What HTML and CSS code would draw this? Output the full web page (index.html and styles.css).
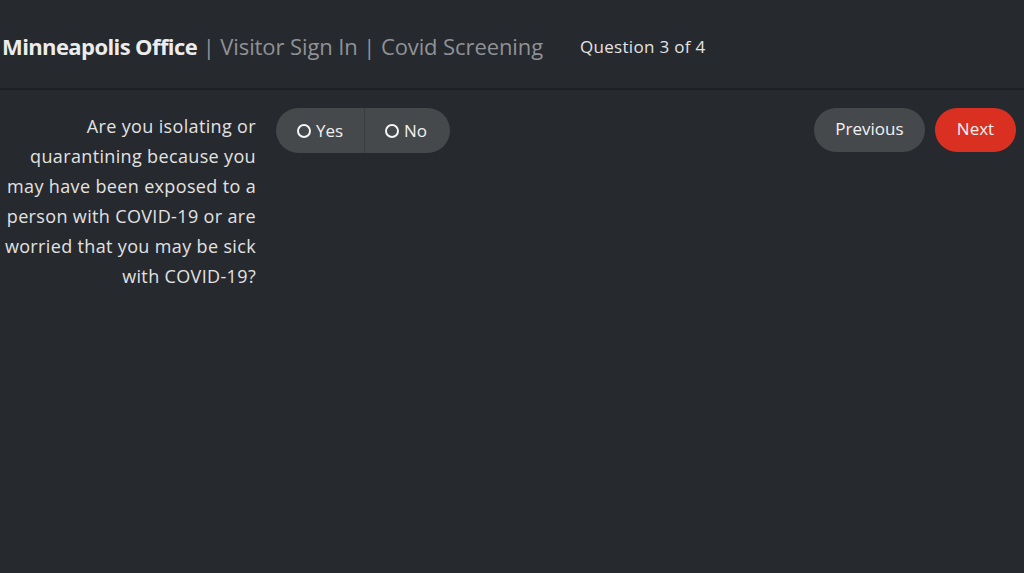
FILE: index.html
```html
<!DOCTYPE html>
<html>
<head>
<meta charset="utf-8">
<link rel="stylesheet" href="styles.css">
</head>
<body>
<header class="top">
  <h1 class="title"><span class="office">Minneapolis Office</span><span class="sub"> | Visitor Sign In | Covid Screening</span></h1>
  <div class="progress">Question 3 of 4</div>
</header>
<main class="content">
  <p class="question">Are you isolating or<br>quarantining because you<br>may have been exposed to a<br>person with COVID-19 or are<br>worried that you may be sick<br>with COVID-19?</p>
  <div class="choices">
    <label class="choice"><span class="radio"></span>Yes</label>
    <label class="choice"><span class="radio"></span>No</label>
  </div>
  <div class="nav">
    <button class="btn btn-prev">Previous</button>
    <button class="btn btn-next">Next</button>
  </div>
</main>
</body>
</html>
```
FILE: styles.css
```css
html, body {
  margin: 0;
  padding: 0;
  background: #26292e;
  height: 100%;
}
body {
  font-family: "Open Sans", "DejaVu Sans", sans-serif;
  color: #e6e6e6;
}
.top {
  display: flex;
  align-items: center;
  height: 90px;
  padding-left: 2px;
  padding-top: 4px;
  border-bottom: 2px solid #1d1f23;
  box-sizing: border-box;
}
.title {
  margin: 0;
  font-size: 22px;
  font-weight: 400;
  white-space: nowrap;
}
.office {
  font-weight: 700;
  color: #ececec;
  letter-spacing: -0.6px;
}
.sub {
  color: #8f9296;
  letter-spacing: -0.1px;
}
.progress {
  margin-left: 37px;
  font-size: 17px;
  letter-spacing: 0.3px;
  color: #e4e4e4;
}
.content {
  display: flex;
  align-items: flex-start;
  padding-top: 17px;
}
.question {
  margin: 0;
  margin-top: 4px;
  width: 256px;
  text-align: right;
  white-space: nowrap;
  font-size: 18px;
  letter-spacing: 0.35px;
  line-height: 30px;
  color: #e2e2e2;
}
.choices {
  display: flex;
  margin-left: 20px;
  margin-top: 1px;
  height: 45px;
  background: #45494c;
  border-radius: 23px;
  overflow: hidden;
}
.choice {
  display: flex;
  align-items: center;
  font-size: 17px;
  color: #f0f0f0;
}
.choice:first-child {
  width: 89px;
  padding-left: 21px;
  box-sizing: border-box;
  border-right: 1px solid #3a3d40;
}
.choice:last-child {
  width: 85px;
  padding-left: 20px;
  box-sizing: border-box;
}
.radio {
  width: 10px;
  height: 10px;
  border: 2.5px solid #f5f5f5;
  border-radius: 50%;
  margin-right: 5px;
}
.nav {
  margin-left: auto;
  margin-right: 8px;
  margin-top: 1px;
  display: flex;
  gap: 10px;
}
.btn {
  font-family: inherit;
  font-size: 17px;
  height: 44px;
  padding-bottom: 4px;
  border: none;
  border-radius: 22px;
  color: #f2f2f2;
  cursor: pointer;
}
.btn-prev {
  width: 111px;
  background: #45494c;
}
.btn-next {
  width: 81px;
  background: #d93021;
}
```
